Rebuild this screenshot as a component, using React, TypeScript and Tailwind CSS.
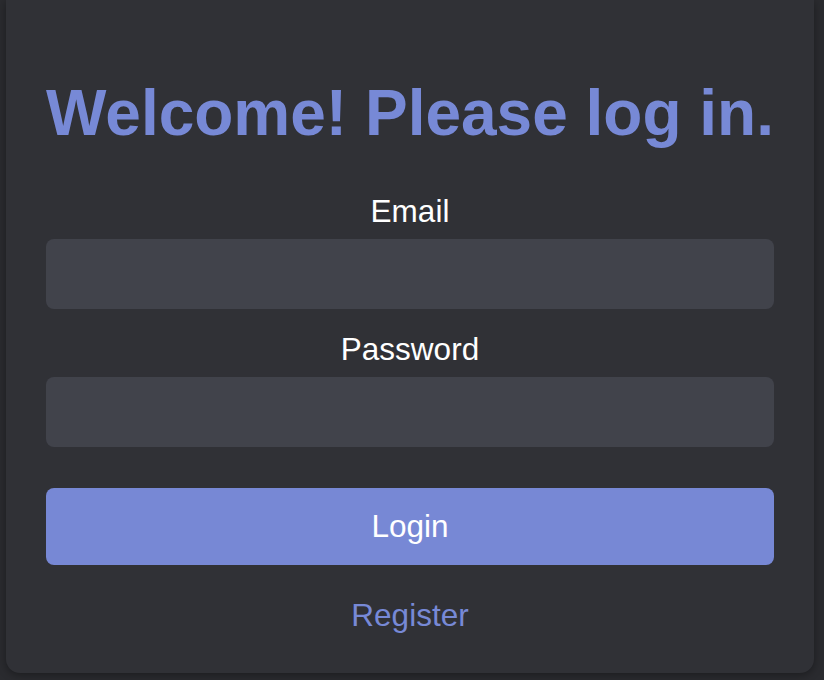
export default function App() {
  return (
    <div className="h-[680px] w-[824px] overflow-hidden bg-[#2a2b2f] font-['Liberation_Sans',Arial,sans-serif]">
      <div className="ml-[6px] flex h-[673px] w-[808px] flex-col rounded-b-[14px] bg-[#303136] px-[40px] pt-[76px] shadow-[0_2px_8px_rgba(0,0,0,0.35)]">
        <h1 className="text-center text-[64px] font-bold leading-[74px] text-[#7789d6]">
          Welcome! Please log in.
        </h1>

        <label className="mt-[43px] text-center text-[31.5px] leading-[36px] text-white">Email</label>
        <input
          type="email"
          className="mt-[10px] h-[70px] w-full rounded-[8px] border-none bg-[#41434b] px-4 text-[28px] text-white outline-none"
        />

        <label className="mt-[22px] text-center text-[31.5px] leading-[36px] text-white">Password</label>
        <input
          type="password"
          className="mt-[10px] h-[70px] w-full rounded-[8px] border-none bg-[#41434b] px-4 text-[28px] text-white outline-none"
        />

        <button className="mt-[41px] h-[77px] w-full rounded-[8px] bg-[#7788d5] text-[31.5px] text-white">
          Login
        </button>

        <a className="mt-[32px] text-center text-[31.5px] leading-[36px] text-[#7789d6]">Register</a>
      </div>
    </div>
  )
}
